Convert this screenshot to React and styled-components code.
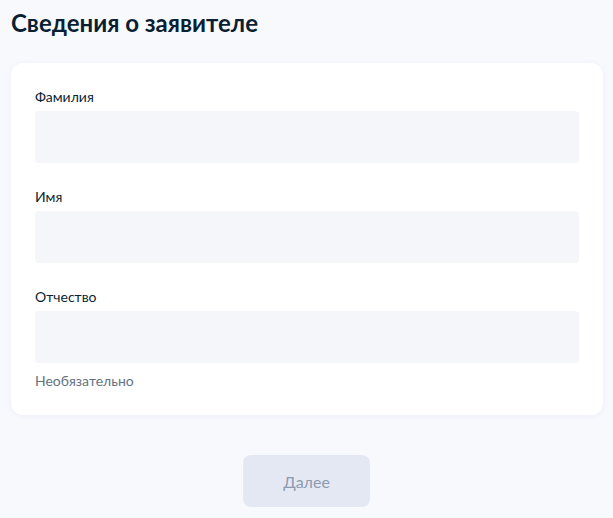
import React from "react";
import styled, { createGlobalStyle } from "styled-components";

const Global = createGlobalStyle`
  html, body { margin: 0; padding: 0; background: #f8f9fd; }
  body { font-family: Lato, "Noto Sans", sans-serif; color: #0b1f33; }
`;

const Page = styled.div`
  padding: 8px 10px 12px 11px;
  display: flex;
  flex-direction: column;
`;

const Title = styled.h1`
  margin: 0;
  font-size: 24px;
  line-height: 30px;
  font-weight: 700;
  color: #0b1f33;
`;

const Card = styled.div`
  margin-top: 25px;
  background: #fff;
  border-radius: 12px;
  box-shadow: 0 1px 6px rgba(100, 120, 200, 0.08);
  padding: 24px 24px 24px;
  display: flex;
  flex-direction: column;
  gap: 24px;
`;

const Field = styled.div`
  display: flex;
  flex-direction: column;
`;

const Label = styled.label`
  font-size: 14px;
  line-height: 20px;
  margin-bottom: 4px;
  color: #0b1f33;
`;

const Input = styled.input`
  height: 52px;
  border: none;
  outline: none;
  border-radius: 4px;
  background: #f5f6fa;
  padding: 0 12px;
  font-family: inherit;
  font-size: 16px;
  box-sizing: border-box;
  width: 100%;
`;

const Hint = styled.div`
  margin-top: 8px;
  font-size: 14px;
  line-height: 20px;
  color: #66727f;
`;

const Actions = styled.div`
  display: flex;
  justify-content: center;
  margin-top: 40px;
  padding-right: 1px;
`;

const Button = styled.button`
  width: 127px;
  height: 52px;
  border: none;
  border-radius: 8px;
  background: #e4e8f2;
  color: #8d9bb0;
  font-family: inherit;
  font-size: 16px;
  cursor: default;
`;

export default function App() {
  return (
    <>
      <Global />
      <Page>
        <Title>Сведения о заявителе</Title>
        <Card>
          <Field>
            <Label>Фамилия</Label>
            <Input />
          </Field>
          <Field>
            <Label>Имя</Label>
            <Input />
          </Field>
          <Field>
            <Label>Отчество</Label>
            <Input />
            <Hint>Необязательно</Hint>
          </Field>
        </Card>
        <Actions>
          <Button disabled>Далее</Button>
        </Actions>
      </Page>
    </>
  );
}
